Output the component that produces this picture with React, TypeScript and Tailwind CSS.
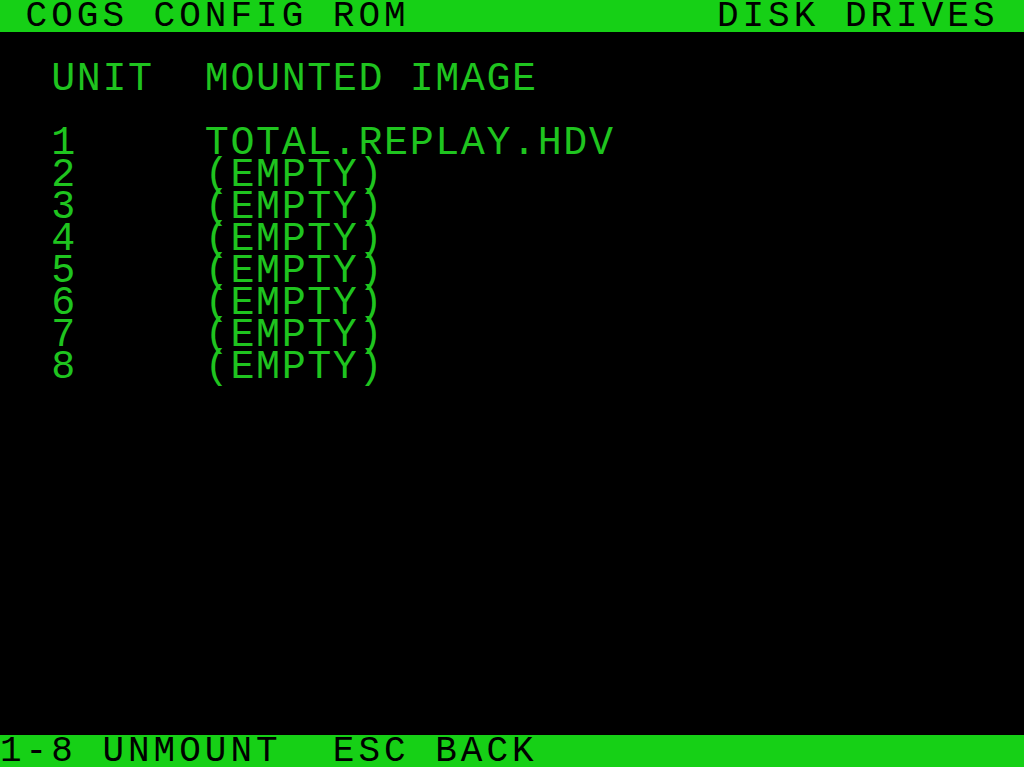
import React from "react";

const font = { fontFamily: '"Liberation Mono", "DejaVu Sans Mono", monospace' };

function Row({ text, inverse = false }: { text: string; inverse?: boolean }) {
  return (
    <div
      className={
        inverse
          ? "h-[32px] whitespace-pre text-[36px] leading-[30px] tracking-[4px] pt-[2px] bg-[#16d016] text-black"
          : "h-[32px] whitespace-pre text-[40px] leading-[30px] tracking-[1.6px] pt-[1px] text-[#1fc41f]"
      }
    >
      {text}
    </div>
  );
}

export default function App() {
  const rows: { text: string; inverse?: boolean }[] = [
    { text: " COGS CONFIG ROM            DISK DRIVES", inverse: true },
    { text: "" },
    { text: "  UNIT  MOUNTED IMAGE" },
    { text: "" },
    { text: "  1     TOTAL.REPLAY.HDV" },
    { text: "  2     (EMPTY)" },
    { text: "  3     (EMPTY)" },
    { text: "  4     (EMPTY)" },
    { text: "  5     (EMPTY)" },
    { text: "  6     (EMPTY)" },
    { text: "  7     (EMPTY)" },
    { text: "  8     (EMPTY)" },
  ];
  return (
    <div className="w-[1024px] h-[767px] bg-black flex flex-col overflow-hidden" style={font}>
      <div className="flex flex-col">
        {rows.map((r, i) => (
          <Row key={i} text={r.text} inverse={r.inverse} />
        ))}
      </div>
      <div className="flex-1" />
      <Row text="1-8 UNMOUNT  ESC BACK" inverse />
    </div>
  );
}
